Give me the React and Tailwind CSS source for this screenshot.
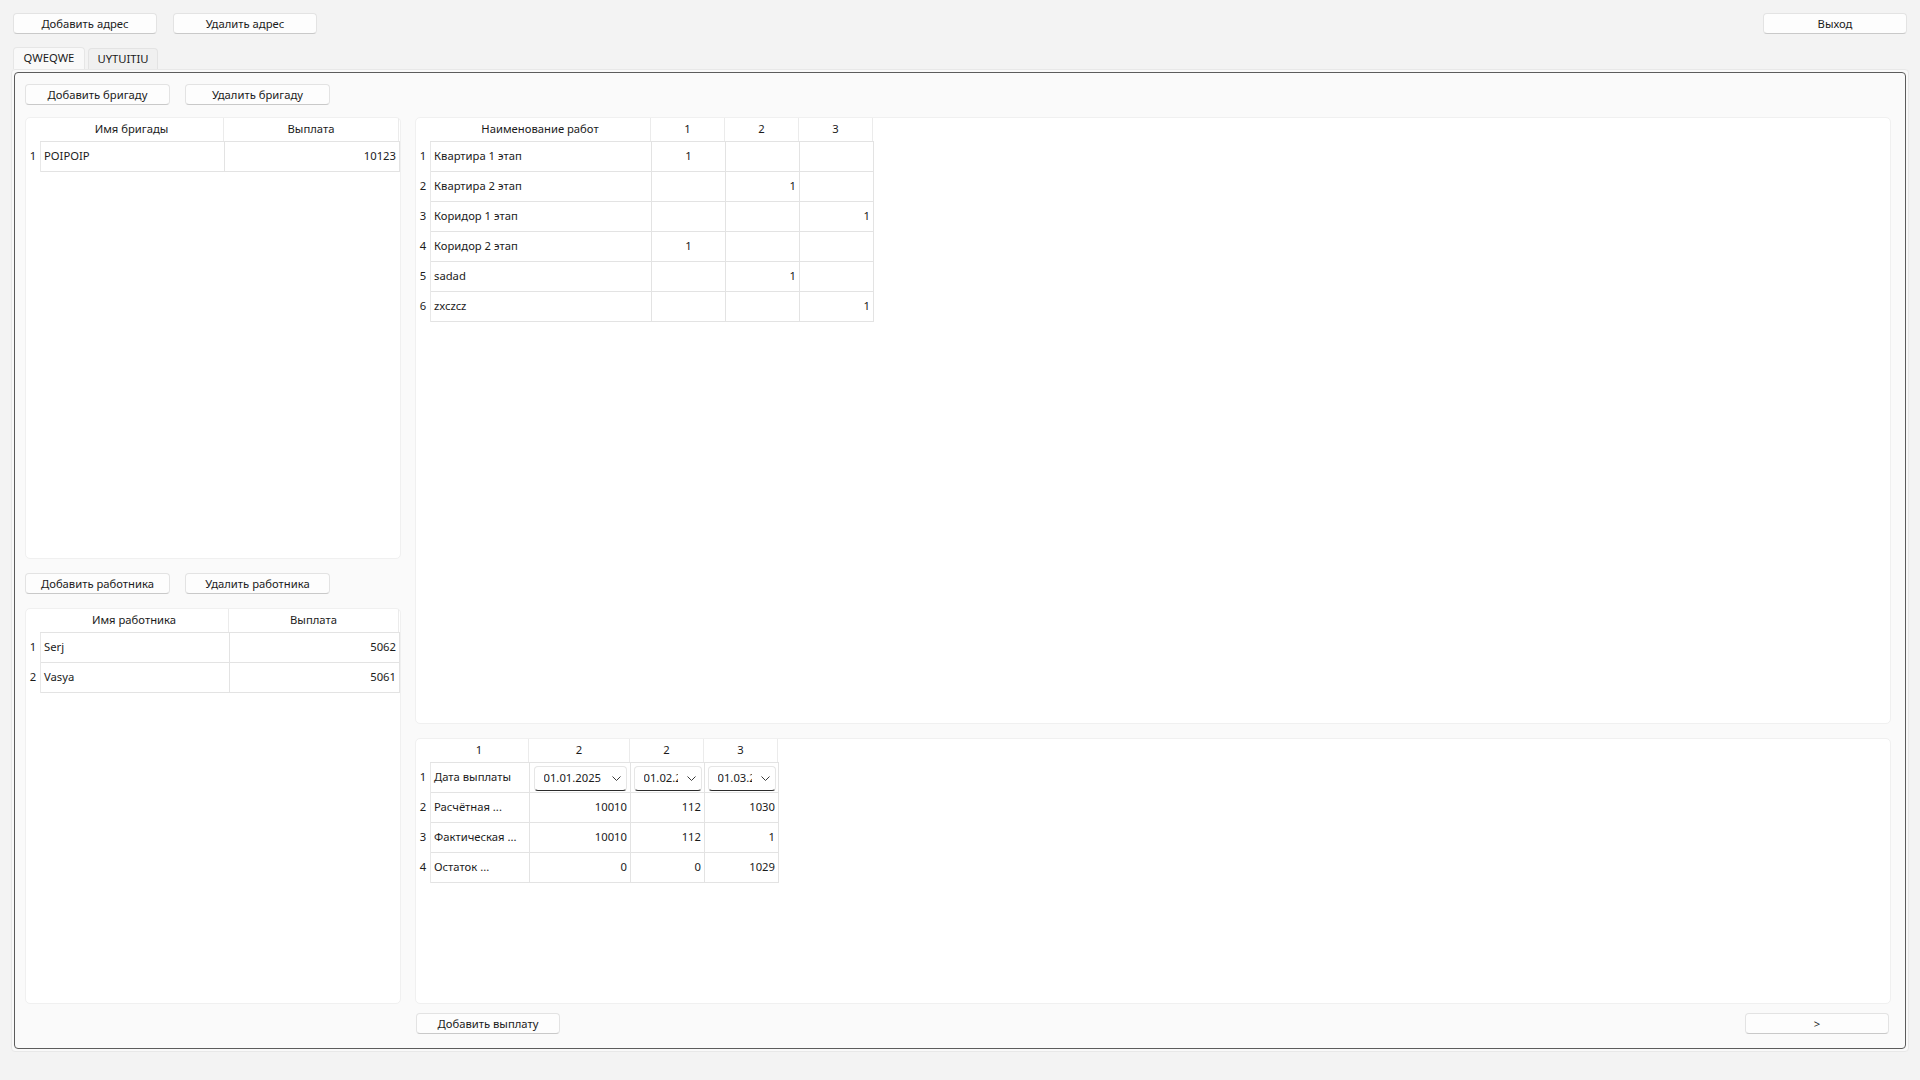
import React from "react";

const Btn = ({ children, className = "" }) => (
  <div
    className={
      "h-[21px] pt-[1px] flex items-center justify-center bg-[#fdfdfd] border border-[#e3e3e3] border-b-[#c9c9c9] rounded-[4px] text-[#1b1b1b] " +
      className
    }
  >
    {children}
  </div>
);

const Chevron = () => (
  <svg width="9" height="5" viewBox="0 0 9 5" className="shrink-0 ml-[9px]">
    <polyline points="0.5,0.5 4.5,4.5 8.5,0.5" fill="none" stroke="#3a3a3a" strokeWidth="1" />
  </svg>
);

const Combo = ({ text, w }) => (
  <div className={"h-[25px] mt-[1px] flex items-center pl-[9px] pr-[5px] bg-white border border-[#e6e6e6] border-b-[#2a2a2a] rounded-[4px] " + w}>
    <span className="flex-1 min-w-0 overflow-hidden whitespace-nowrap">{text}</span>
    <Chevron />
  </div>
);

const Grid = ({ cols, headers, rows }) => (
  <div className="flex">
    <div className="w-[14px] shrink-0">
      <div className="h-[24px]" />
      {rows.map((_, i) => (
        <div key={i} className="h-[30px] flex items-center justify-center pb-[1px]">
          {i + 1}
        </div>
      ))}
    </div>
    <div className="flex flex-col">
      <div className="flex h-[24px] border-b border-[#e3e3e3]">
        {headers.map((h, i) => (
          <div key={i} className={"flex items-center justify-center border-r border-[#ebebeb] " + cols[i]}>
            {h}
          </div>
        ))}
      </div>
      <div className="border-l border-[#e8e8e8]">
        {rows.map((r, ri) => (
          <div key={ri} className="flex h-[30px] border-b border-[#e3e3e3]">
            {r.map((c, ci) => (
              <div
                key={ci}
                className={
                  "flex items-center px-[3px] border-r border-[#e3e3e3] whitespace-nowrap overflow-hidden " +
                  cols[ci] +
                  " " +
                  (c.a === "r" ? "justify-end" : c.a === "c" ? "justify-center" : "justify-start")
                }
              >
                {c.node ? c.node : c.t}
              </div>
            ))}
          </div>
        ))}
      </div>
    </div>
  </div>
);

const L = (t) => ({ t, a: "l" });
const R = (t) => ({ t, a: "r" });
const C = (t) => ({ t, a: "c" });
const E = { t: "", a: "l" };

export default function App() {
  const brigadeCols = ["w-[184px]", "w-[175px]"];
  const workerCols = ["w-[189px]", "w-[170px]"];
  const worksCols = ["w-[221px]", "w-[74px]", "w-[74px]", "w-[74px]"];
  const payCols = ["w-[99px]", "w-[101px]", "w-[74px]", "w-[74px]"];

  const worksRows = [
    [L("Квартира 1 этап"), C("1"), E, E],
    [L("Квартира 2 этап"), E, R("1"), E],
    [L("Коридор 1 этап"), E, E, R("1")],
    [L("Коридор 2 этап"), C("1"), E, E],
    [L("sadad"), E, R("1"), E],
    [L("zxczcz"), E, E, R("1")],
  ];

  const payRows = [
    [
      L("Дата выплаты"),
      { a: "c", node: <Combo text="01.01.2025" w="w-[93px]" /> },
      { a: "c", node: <Combo text="01.02.2025" w="w-[68px]" /> },
      { a: "c", node: <Combo text="01.03.2025" w="w-[68px]" /> },
    ],
    [L("Расчётная ..."), R("10010"), R("112"), R("1030")],
    [L("Фактическая ..."), R("10010"), R("112"), R("1")],
    [L("Остаток ..."), R("0"), R("0"), R("1029")],
  ];

  return (
    <div className="w-[1920px] h-[1080px] bg-[#f3f3f3] font-['Noto_Sans',sans-serif] text-[11.25px] text-[#1b1b1b] pt-[13px] overflow-hidden">
      {/* top bar */}
      <div className="flex justify-between px-[13px]">
        <div className="flex gap-[16px]">
          <Btn className="w-[144px]">Добавить адрес</Btn>
          <Btn className="w-[144px]">Удалить адрес</Btn>
        </div>
        <Btn className="w-[144px]">Выход</Btn>
      </div>

      {/* tabs */}
      <div className="flex items-end gap-[3px] pl-[13px] mt-[13px] h-[22px]">
        <div className="w-[72px] h-[22px] flex items-center justify-center bg-[#f9f9f9] border border-b-0 border-[#e6e6e6] rounded-t-[4px]">
          QWEQWE
        </div>
        <div className="w-[70px] h-[21px] flex items-center justify-center bg-[#f0f0f0] border border-b-0 border-[#e3e3e3] rounded-t-[4px]">
          UYTUITIU
        </div>
      </div>

      {/* pane */}
      <div className="ml-[11px] w-[1898px] h-[983px] p-[2px] bg-[#f9f9f9] border border-[#e8e8e8] rounded-[4px]">
        <div className="h-full border border-[#5c5c5c] rounded-[4px] bg-[#fafafa] pt-[11px] pl-[10px]">
          <div className="flex gap-[15px]">
            <Btn className="w-[145px]">Добавить бригаду</Btn>
            <Btn className="w-[145px]">Удалить бригаду</Btn>
          </div>

          <div className="flex gap-[14px] mt-[12px]">
            {/* left column */}
            <div className="w-[376px] flex flex-col">
              <div className="h-[442px] bg-white rounded-[5px] border border-[#f0f0f0] overflow-hidden">
                <Grid cols={brigadeCols} headers={["Имя бригады", "Выплата"]} rows={[[L("POIPOIP"), R("10123")]]} />
              </div>
              <div className="flex gap-[15px] mt-[14px]">
                <Btn className="w-[145px]">Добавить работника</Btn>
                <Btn className="w-[145px]">Удалить работника</Btn>
              </div>
              <div className="h-[396px] mt-[14px] bg-white rounded-[5px] border border-[#f0f0f0] overflow-hidden">
                <Grid
                  cols={workerCols}
                  headers={["Имя работника", "Выплата"]}
                  rows={[
                    [L("Serj"), R("5062")],
                    [L("Vasya"), R("5061")],
                  ]}
                />
              </div>
            </div>

            {/* right column */}
            <div className="w-[1476px] flex flex-col">
              <div className="h-[607px] bg-white rounded-[5px] border border-[#f0f0f0] overflow-hidden">
                <Grid cols={worksCols} headers={["Наименование работ", "1", "2", "3"]} rows={worksRows} />
              </div>
              <div className="h-[266px] mt-[14px] bg-white rounded-[5px] border border-[#f0f0f0] overflow-hidden">
                <Grid cols={payCols} headers={["1", "2", "2", "3"]} rows={payRows} />
              </div>
              <div className="flex justify-between mt-[9px] pl-[1px] pr-[2px]">
                <Btn className="w-[144px]">Добавить выплату</Btn>
                <Btn className="w-[144px]">&gt;</Btn>
              </div>
            </div>
          </div>
        </div>
      </div>
    </div>
  );
}
